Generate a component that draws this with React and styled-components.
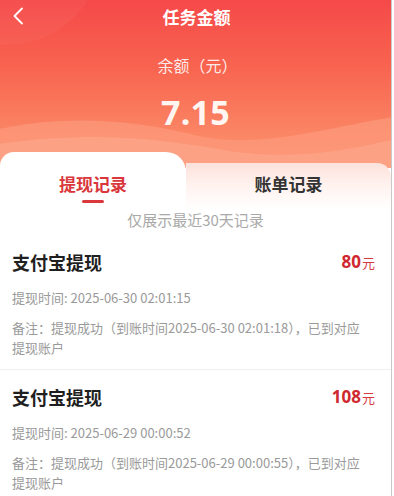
import styled, { createGlobalStyle } from "styled-components";

const GlobalStyle = createGlobalStyle`
  html, body {
    margin: 0;
    padding: 0;
    background: #ffffff;
  }
  body {
    font-family: "Noto Sans CJK SC", "Noto Sans", sans-serif;
  }
`;

const records = [
  {
    title: "支付宝提现",
    amount: "80",
    time: "2025-06-30 02:01:15",
    arrived: "2025-06-30 02:01:18",
  },
  {
    title: "支付宝提现",
    amount: "108",
    time: "2025-06-29 00:00:52",
    arrived: "2025-06-29 00:00:55",
  },
];

const App = () => {
  return (
    <Page>
      <GlobalStyle />
      <Header>
        <Waves viewBox="0 0 391 60" preserveAspectRatio="none">
          <path
            d="M0 18 C 60 4, 130 6, 200 26 C 260 40, 330 16, 391 6 L391 60 L0 60 Z"
            fill="#fc9a7c"
            opacity="0.7"
          />
          <path
            d="M0 34 C 90 20, 160 28, 230 42 C 300 52, 350 40, 391 30 L391 60 L0 60 Z"
            fill="#fda488"
            opacity="0.8"
          />
        </Waves>
        <TopBar>
          <BackButton>
            <svg width="12" height="18" viewBox="0 0 12 18">
              <polyline
                points="10,1.5 2.5,9 10,16.5"
                fill="none"
                stroke="#ffffff"
                strokeWidth="1.8"
                strokeLinecap="round"
                strokeLinejoin="round"
              />
            </svg>
          </BackButton>
          <Title>任务金额</Title>
        </TopBar>
        <BalanceLabel>余额（元）</BalanceLabel>
        <Balance>7.15</Balance>
      </Header>

      <Tabs>
        <Tab $active>
          <TabLabel $active>提现记录</TabLabel>
          <Underline />
        </Tab>
        <Tab>
          <TabLabel>账单记录</TabLabel>
        </Tab>
      </Tabs>

      <Notice>仅展示最近30天记录</Notice>

      <List>
        {records.map((r, i) => (
          <Item key={i}>
            <ItemHead>
              <ItemTitle>{r.title}</ItemTitle>
              <Amount>
                {r.amount}
                <Unit>元</Unit>
              </Amount>
            </ItemHead>
            <Time>{`提现时间: ${r.time}`}</Time>
            <Remark>
              {`备注：提现成功（到账时间${r.arrived}），已到对应提现账户`}
            </Remark>
          </Item>
        ))}
      </List>
    </Page>
  );
};

export default App;

const Page = styled.div`
  box-sizing: border-box;
  width: 392px;
  min-height: 496px;
  background: #ffffff;
  border-right: 1px solid #c9c9c9;
  overflow: hidden;
`;

const Header = styled.div`
  position: relative;
  height: 168px;
  overflow: hidden;
  background: linear-gradient(180deg, #f5494a 0%, #f8644f 40%, #fb8a68 85%, #fc936f 100%);
  display: flex;
  flex-direction: column;
  align-items: center;

  &::before {
    content: "";
    position: absolute;
    left: -90px;
    top: -130px;
    width: 190px;
    height: 175px;
    border-radius: 50%;
    background: rgba(255, 255, 255, 0.035);
  }
`;

const Waves = styled.svg`
  position: absolute;
  left: 0;
  bottom: 0;
  width: 100%;
  height: 56px;
`;

const TopBar = styled.div`
  position: relative;
  width: 100%;
  height: 34px;
  display: flex;
  align-items: center;
  justify-content: center;
`;

const BackButton = styled.div`
  position: absolute;
  left: 12px;
  top: 7px;
  display: flex;
`;

const Title = styled.div`
  color: #ffffff;
  font-size: 17px;
  font-weight: 700;
  line-height: 34px;
  padding-left: 2px;
`;

const BalanceLabel = styled.div`
  position: relative;
  margin-top: 19px;
  color: rgba(255, 255, 255, 0.88);
  font-size: 16px;
  line-height: 24px;
  padding-left: 4px;
`;

const Balance = styled.div`
  position: relative;
  margin-top: 16px;
  color: #fff6f2;
  font-family: "Noto Sans", "Open Sans", sans-serif;
  font-size: 34px;
  font-weight: 700;
  line-height: 38px;
  letter-spacing: 0.3px;
`;

const Tabs = styled.div`
  position: relative;
  margin-top: -16px;
  height: 58px;
  display: grid;
  grid-template-columns: 186px 1fr;
  align-items: end;
`;

const Tab = styled.div`
  box-sizing: border-box;
  height: ${(p) => (p.$active ? "58px" : "47px")};
  padding-top: ${(p) => (p.$active ? "20px" : "9px")};
  display: flex;
  flex-direction: column;
  align-items: center;
  background: ${(p) =>
    p.$active
      ? "#ffffff"
      : "linear-gradient(180deg, #fde1db 0%, #fff3f0 50%, #ffffff 100%)"};
  border-radius: ${(p) => (p.$active ? "14px 20px 0 0" : "0 14px 0 0")};
`;

const TabLabel = styled.div`
  font-size: 17px;
  font-weight: 700;
  line-height: 24px;
  color: ${(p) => (p.$active ? "#d9373b" : "#333333")};
`;

const Underline = styled.div`
  margin-top: 4px;
  width: 22px;
  height: 3px;
  border-radius: 2px;
  background: #d9373b;
`;

const Notice = styled.div`
  text-align: center;
  color: #a9a9a9;
  font-size: 15px;
  line-height: 20px;
`;

const List = styled.div`
  margin-top: 5px;
  display: flex;
  flex-direction: column;
`;

const Item = styled.div`
  padding: 16px 16px 11px 12px;
  border-bottom: 1px solid #efefef;
`;

const ItemHead = styled.div`
  display: flex;
  justify-content: space-between;
  align-items: center;
  height: 22px;
`;

const ItemTitle = styled.div`
  font-size: 18px;
  font-weight: 700;
  color: #1f1f1f;
  line-height: 22px;
`;

const Amount = styled.div`
  font-family: "Noto Sans", "Open Sans", sans-serif;
  font-size: 17px;
  font-weight: 700;
  color: #d0282f;
  line-height: 22px;
`;

const Unit = styled.span`
  font-family: "Noto Sans CJK SC", sans-serif;
  font-size: 13px;
  font-weight: 400;
  color: #d63a3f;
  margin-left: 1px;
`;

const Time = styled.div`
  margin-top: 15px;
  font-size: 13px;
  line-height: 20px;
  color: #9a9a9a;
`;

const Remark = styled.div`
  margin-top: 10px;
  font-size: 13px;
  line-height: 20px;
  color: #9a9a9a;
  padding-right: 10px;
`;
